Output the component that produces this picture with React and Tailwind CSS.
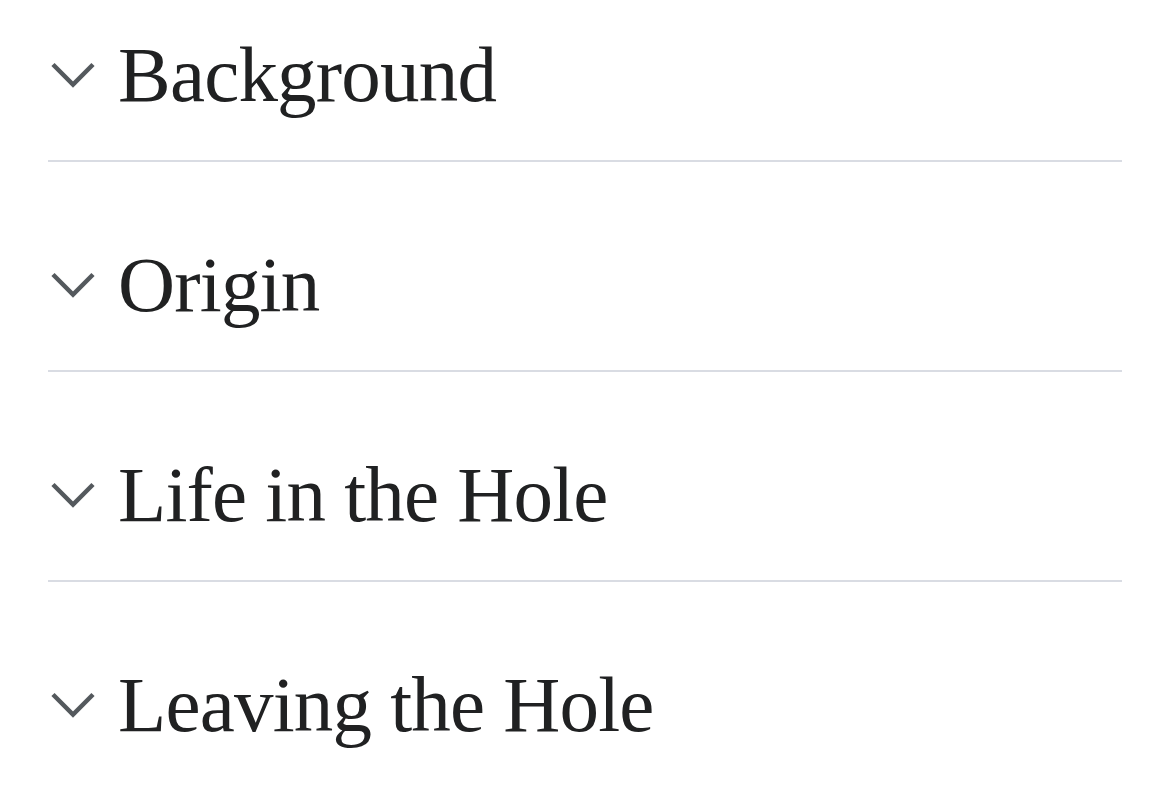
import React from 'react';

const sections = ['Background', 'Origin', 'Life in the Hole', 'Leaving the Hole'];

function Chevron() {
  return (
    <svg width="46" height="28" viewBox="0 0 46 28" className="shrink-0" aria-hidden="true">
      <polyline points="3,3.5 23,23.5 43,3.5" fill="none" stroke="#54595d" strokeWidth="4.5" />
    </svg>
  );
}

export default function App() {
  return (
    <div className="min-h-[789px] bg-white px-[48px]" style={{ fontFamily: '"Liberation Serif", serif' }}>
      {sections.map((title, i) => (
        <div
          key={title}
          className={`flex items-center ${i === 0 ? 'pt-[35px]' : 'pt-[83px]'} pb-[46px] ${
            i < sections.length - 1 ? 'border-b-2 border-[#d9dce3]' : ''
          }`}
        >
          <div className="pl-[2px]">
            <Chevron />
          </div>
          <h2 className="ml-[22px] text-[79px] leading-none tracking-[-0.8px] text-[#202122] font-normal">
            {title}
          </h2>
        </div>
      ))}
    </div>
  );
}
